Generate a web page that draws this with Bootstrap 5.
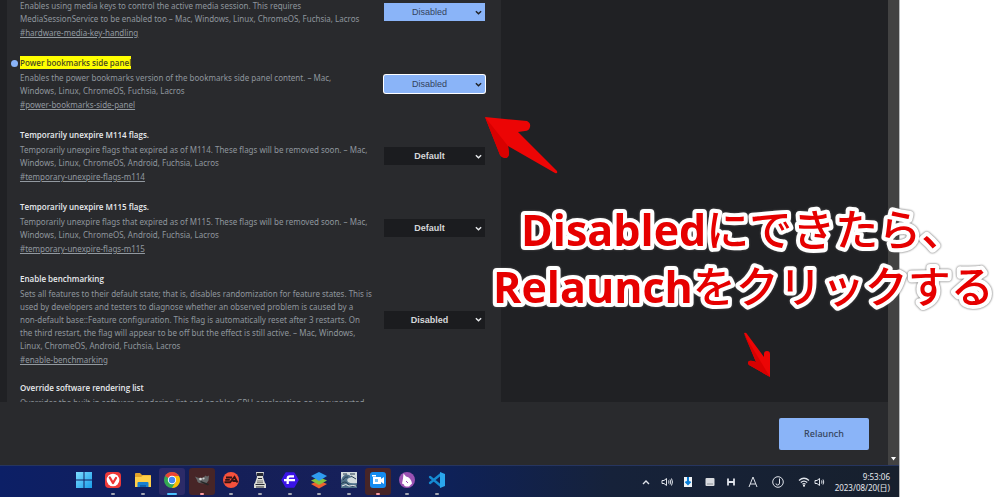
<!DOCTYPE html>
<html lang="ja">
<head>
<meta charset="utf-8">
<meta name="viewport" content="width=device-width, initial-scale=1">
<title>Experiments</title>
<link href="https://cdn.jsdelivr.net/npm/bootstrap@5.3.0/dist/css/bootstrap.min.css" rel="stylesheet">
<style>
  body { background: #fff; font-family: "Noto Sans", "Noto Sans CJK JP", sans-serif; font-size: 9px; }
  .desktop { width: 90%; border-right: 1px solid #b9bbbd; background: #202124; }
  .pane { background: #292a2d; width: 494px; margin-left: 7px; padding-left: 13px; padding-right: 16px; }
  .shift-up { margin-top: -16px; }
  .flag { margin-bottom: 16px; }
  .flag.tall { margin-bottom: 14px; }
  .flag-text { line-height: 13px; color: #8f969d; font-family: "Noto Sans", sans-serif; font-size: 8px; white-space: nowrap; }
  .flag-text.untitled { padding-top: 15px; }
  .flag-text h2 { font-family: "Open Sans", "Noto Sans", sans-serif; font-size: 8px; line-height: 14px; font-weight: 600; color: #e8eaed; margin: 0 0 1px; }
  .flag-text p { margin: 0 0 1px; }
  .flag-text a { display: block; line-height: 14px; color: #9299a0; }
  .flag-text h2 mark { background: #ff0; color: #4a4a20; padding: 0; display: inline-block; line-height: 13px; font-weight: 600; }
  .dot { position: absolute; left: -9px; top: 4px; width: 7px; height: 7px; border-radius: 50%; background: #8ab4f8; }
  .pick { width: 101px; height: 18px; min-height: 0; padding: 0 10px 0 0; text-align: center; text-align-last: center; border: 0; border-radius: 0;
    font: 600 9px/18px "Liberation Sans", sans-serif; color: #d5d7da; background-color: #1b1c1f; background-position: right 3px center; background-size: 7px 7px;
    background-image: url("data:image/svg+xml,%3csvg xmlns='http://www.w3.org/2000/svg' viewBox='0 0 8 8'%3e%3cpath d='M1 2.5l3 3 3-3' fill='none' stroke='%23e8eaed' stroke-width='1.6'/%3e%3c/svg%3e"); }
  .pick.changed { font-weight: 400; color: #34435c; background-color: #8ab4f8;
    background-image: url("data:image/svg+xml,%3csvg xmlns='http://www.w3.org/2000/svg' viewBox='0 0 8 8'%3e%3cpath d='M1 2.5l3 3 3-3' fill='none' stroke='%23202124' stroke-width='1.6'/%3e%3c/svg%3e"); }
  .pick.focused { border-radius: 2px; box-shadow: 0 0 0 1px #fff; }
  .scroller { width: 11px; background: #424242; }
  .scroller svg { width: 7px; height: 4px; margin-bottom: 4px; }
  .restart { background: #292a2d; height: 63px; padding-right: 19px; }
  .restart .btn { width: 90px; height: 32px; padding: 0; border-radius: 2px; border: 0; background: #8ab4f8; color: #35445c; font-size: 9px; font-weight: 500; }
  .taskbar { height: 32px; padding-left: 71px; padding-right: 9px; color: #dfe3ea; background: linear-gradient(90deg, #0c1f66, #151f58 25%, #16205a 40%, #0e2158 50%, #16223a 68%, #17202d); border-top: 1px solid #26355f; }
  .apps { width: 379px; }
  .apps button { width: 26px; height: 27px; padding: 0; border: 0; border-radius: 3px; background: none; position: relative; }
  .apps svg { display: block; width: 18px; height: 18px; margin: 3px auto 6px; }
  .apps .run::after { content: ""; position: absolute; left: 11px; bottom: 0; width: 4px; height: 2px; border-radius: 1px; background: #a4a7b3; }
  .apps .active { background: #2c2b68; }
  .apps .active::after { left: 8px; width: 10px; background: #4cc2ff; }
  .apps .alert-app { background: #472527; }
  .apps .alert-app::after { background: #ff9ca0; }
  .tray { width: 188px; margin-right: 8px; }
  .tray svg { width: 14px; height: 14px; fill: none; stroke: #dfe3ea; stroke-width: 1; }
  .tray-pair { gap: 2px; }
  .clock { font-size: 8px; line-height: 11px; color: #e8ebf0; }
  .note { position: absolute; overflow: visible; }
  .headline { left: 49%; top: 195px; width: 510px; height: 125px; filter: drop-shadow(0 0 1px #555); }
  .headline text { font-family: "Open Sans", "Noto Sans", sans-serif; font-size: 43px; font-weight: 700; fill: #e60000; stroke: #fff; stroke-width: 8px; stroke-linejoin: round; paint-order: stroke; }
  .headline .kana { font-family: "Noto Sans CJK JP", sans-serif; font-weight: 500; }
  .arrow-a { left: 485px; top: 117px; width: 73px; height: 58px; }
  .arrow-b { left: 743px; top: 332px; width: 28px; height: 46px; }
</style>
</head>
<body>
<div class="desktop vh-100 d-flex flex-column overflow-hidden">
  <div class="d-flex flex-grow-1 overflow-hidden">
    <div class="d-flex flex-column flex-grow-1 overflow-hidden">
      <main class="flex-grow-1 overflow-hidden d-flex">
        <div class="pane">
          <div class="shift-up">
            <section class="flag d-flex justify-content-between align-items-center">
              <div class="flag-text untitled">
                <p>Enables using media keys to control the active media session. This requires<br>MediaSessionService to be enabled too – Mac, Windows, Linux, ChromeOS, Fuchsia, Lacros</p>
                <a href="#hardware-media-key-handling">#hardware-media-key-handling</a>
              </div>
              <select class="form-select pick changed" aria-label="Hardware media key handling"><option>Disabled</option></select>
            </section>
            <section class="flag d-flex justify-content-between align-items-center">
              <div class="flag-text position-relative">
                <span class="dot"></span>
                <h2><mark>Power bookmarks side panel</mark></h2>
                <p>Enables the power bookmarks version of the bookmarks side panel content. – Mac,<br>Windows, Linux, ChromeOS, Fuchsia, Lacros</p>
                <a href="#power-bookmarks-side-panel">#power-bookmarks-side-panel</a>
              </div>
              <select class="form-select pick changed focused" aria-label="Power bookmarks side panel"><option>Disabled</option></select>
            </section>
            <section class="flag d-flex justify-content-between align-items-center">
              <div class="flag-text">
                <h2>Temporarily unexpire M114 flags.</h2>
                <p>Temporarily unexpire flags that expired as of M114. These flags will be removed soon. – Mac,<br>Windows, Linux, ChromeOS, Android, Fuchsia, Lacros</p>
                <a href="#temporary-unexpire-flags-m114">#temporary-unexpire-flags-m114</a>
              </div>
              <select class="form-select pick" aria-label="Temporarily unexpire M114 flags"><option>Default</option></select>
            </section>
            <section class="flag d-flex justify-content-between align-items-center">
              <div class="flag-text">
                <h2>Temporarily unexpire M115 flags.</h2>
                <p>Temporarily unexpire flags that expired as of M115. These flags will be removed soon. – Mac,<br>Windows, Linux, ChromeOS, Android, Fuchsia, Lacros</p>
                <a href="#temporary-unexpire-flags-m115">#temporary-unexpire-flags-m115</a>
              </div>
              <select class="form-select pick" aria-label="Temporarily unexpire M115 flags"><option>Default</option></select>
            </section>
            <section class="flag tall d-flex justify-content-between align-items-center">
              <div class="flag-text">
                <h2>Enable benchmarking</h2>
                <p>Sets all features to their default state; that is, disables randomization for feature states. This is<br>used by developers and testers to diagnose whether an observed problem is caused by a<br>non-default base::Feature configuration. This flag is automatically reset after 3 restarts. On<br>the third restart, the flag will appear to be off but the effect is still active. – Mac, Windows,<br>Linux, ChromeOS, Android, Fuchsia, Lacros</p>
                <a href="#enable-benchmarking">#enable-benchmarking</a>
              </div>
              <select class="form-select pick" aria-label="Enable benchmarking"><option>Disabled</option></select>
            </section>
            <section class="flag d-flex justify-content-between align-items-start">
              <div class="flag-text">
                <h2>Override software rendering list</h2>
                <p>Overrides the built-in software rendering list and enables GPU-acceleration on unsupported</p>
              </div>
            </section>
          </div>
        </div>
      </main>
      <footer class="restart d-flex align-items-center justify-content-end flex-shrink-0">
        <button type="button" class="btn">Relaunch</button>
      </footer>
    </div>
    <div class="scroller d-flex align-items-end justify-content-center flex-shrink-0">
      <svg viewBox="0 0 7 4"><path d="M1 0h5L3.500 3.500z" fill="#fff"/></svg>
    </div>
  </div>

  <nav class="taskbar d-flex align-items-center flex-shrink-0" aria-label="Taskbar">
    <div class="apps d-flex justify-content-between flex-shrink-0">
      <button type="button" aria-label="Start"><svg viewBox="0 0 18 18"><defs><linearGradient id="win" x2="1" y2="1"><stop stop-color="#7ddcff"/><stop offset="1" stop-color="#199de8"/></linearGradient></defs><path d="M1 1h7.500v7.500H1zM9.500 1H17v7.500H9.500zM1 9.500h7.500V17H1zM9.500 9.500H17V17H9.500z" fill="url(#win)"/></svg></button>
      <button type="button" class="run" aria-label="Vivaldi"><svg viewBox="0 0 18 18"><rect x="1" y="1" width="16" height="16" rx="4" fill="#ef3939"/><circle cx="9" cy="9" r="6.300" fill="#fff"/><path d="M5.800 6.500L9 12l3-5" fill="none" stroke="#e33" stroke-width="2.300" stroke-linecap="round" stroke-linejoin="round"/></svg></button>
      <button type="button" class="run" aria-label="Explorer"><svg viewBox="0 0 18 18"><path d="M1 3q0-1 1-1h4l2 2h8q1 0 1 1v4H1z" fill="#e2a32b"/><path d="M1 6h6l2-1.500h8V16H1z" fill="#ffcf48"/><path d="M3.500 16v-4q0-1 1-1h9q1 0 1 1v4z" fill="#187fd0"/><path d="M6 16v-2h6v2z" fill="#0c60ad"/></svg></button>
      <button type="button" class="run active" aria-label="Chrome"><svg viewBox="0 0 18 18"><circle cx="9" cy="9" r="8" fill="#34a853"/><path d="M9 9L2.070 5A8 8 0 0 1 15.930 5z" fill="#ea4335"/><path d="M9 9V5h6.930A8 8 0 0 1 9 17l3.460-6z" fill="#fbbc04"/><circle cx="9" cy="9" r="4.200" fill="#fff"/><circle cx="9" cy="9" r="3.200" fill="#4285f4"/></svg></button>
      <button type="button" class="run alert-app" aria-label="GIMP"><svg viewBox="0 0 18 18"><path d="M2 5.500q3 1.500 6 1.500 3 0 4.500-2.500l1.500 1 2-1-.5 5q-1 2.500-4 3L6 12q-2-1-2-3z" fill="#66686a"/><circle cx="7.500" cy="8" r="1.300" fill="#ddd"/><circle cx="10.500" cy="7.500" r="1.100" fill="#ccc"/><path d="M8 10l8 3-1 1.500-8-3.500z" fill="#252628"/></svg></button>
      <button type="button" class="run" aria-label="EA"><svg viewBox="0 0 18 18"><circle cx="9" cy="9" r="8" fill="#f6513c"/><path d="M4 6.500h6M3.200 8.900h4.600M2.500 11.300h5.600L12.500 6l3 5.500M10.500 10h4" fill="none" stroke="#351313" stroke-width="1.900"/></svg></button>
      <button type="button" class="run" aria-label="Tool"><svg viewBox="0 0 18 18"><path d="M5 1h8l-1 5 2 6 1 1v4H3v-4l1-1 2-6z" fill="#dcdcd6"/><path d="M6 2h6v3H6zM7 7h4v1H7zM4.500 13h9v1h-9zM5 15.500h8v1H5z" fill="#292b33"/><path d="M6 10h6M6 11.700h6" stroke="#777"/></svg></button>
      <button type="button" class="run" aria-label="F"><svg viewBox="0 0 18 18"><path d="M5 2h8L17 9l-4 7H5L1 9z" fill="#3b14e8" stroke="#3b14e8" stroke-width="1.500" stroke-linejoin="round"/><path d="M13 5.300H9Q6.700 5.300 6.700 7.500v5.500M3 9.200H14" fill="none" stroke="#fff" stroke-width="2.300"/></svg></button>
      <button type="button" class="run" aria-label="Layers"><svg viewBox="0 0 18 18"><path d="M9 9.500l8 3.500-8 4.500L1 13z" fill="#f0612f"/><path d="M9 6l8 3.500L9 14 1 9.500z" fill="#82c341"/><path d="M9 1l8 4-8 5-8-5z" fill="#2f9cf1"/></svg></button>
      <button type="button" class="run" aria-label="Wave"><svg viewBox="0 0 18 18"><path d="M1 1h16v16H1z" fill="#d4dcdd"/><path d="M1 9q3-7 8-5l3 2-3 1q-3 1-1 4 3 2 9 1v5H1z" fill="#51718a"/><path d="M1 13q4-4 7 0t9 1M3 9q2-4 5-3M10 3h5M11 5l5 3M3 3h4" fill="none" stroke="#283f54"/><path d="M2 15q4-3 7 0 4-1 7 0" fill="none" stroke="#eee"/></svg></button>
      <button type="button" class="run alert-app" aria-label="Recorder"><svg viewBox="0 0 18 18"><rect x="1" y="1" width="16" height="16" rx="3" fill="#168cf0"/><path d="M4 6h8v2l3-2v7l-3-2v2H4z" fill="#fff"/><path d="M3 4h4v1.500H3z" fill="#fff"/><path d="M6 8h3v3H6z" fill="#75bef8"/></svg></button>
      <button type="button" class="run" aria-label="Unicorn"><svg viewBox="0 0 18 18"><circle cx="9" cy="9" r="8" fill="#9b51b2"/><path d="M5.500 2.500l2.500 3q5 1 6 7l-3 3q-5 .5-5-2l-2-1 1-5z" fill="#fff"/><path d="M8 10l2 2" stroke="#9b51b2"/></svg></button>
      <button type="button" class="run" aria-label="Code"><svg viewBox="0 0 18 18"><path d="M2 6l11 9M2 12L13 3" stroke="#168bd2" stroke-width="2.300" stroke-linecap="round"/><path d="M12 1l5 2v12l-5 2z" fill="#2aa7ee"/></svg></button>
    </div>
    <div class="tray d-flex align-items-center justify-content-between flex-shrink-0 ms-auto">
      <svg viewBox="0 0 14 14"><path d="M4 9l3-3 3 3" stroke-width="1.400"/></svg>
      <svg viewBox="0 0 14 14"><path d="M2 5.500h2l2.500-2v7l-2.500-2h-2zM8.500 5.500q1 1.500 0 3M10 4.500q1.500 2.500 0 5M11.500 3.500q2 3.500 0 7"/></svg>
      <svg viewBox="0 0 14 14"><path d="M3 2h8v10H3z" fill="#eef3f7" stroke="none"/><path d="M7 2v6M4.500 6.500L7 9l2.500-2.500" stroke="#087dd7" stroke-width="2"/></svg>
      <svg viewBox="0 0 14 14"><rect x="2.500" y="3" width="9" height="8" rx="1" fill="#d8dbdf" stroke="none"/><path d="M4 9h6" stroke="#8b9096"/></svg>
      <svg viewBox="0 0 14 14"><path d="M4 3.500v7M10 3.500v7M4 7h6" stroke-width="1.800"/></svg>
      <svg viewBox="0 0 14 14"><path d="M3 12L7 2l4 10M4.300 9h5.400"/></svg>
      <svg viewBox="0 0 14 14" class="ms-1"><circle cx="7" cy="7" r="5.300"/><path d="M8.500 3.500V8q0 2-2 2-1.500 0-1.500-1.500"/></svg>
      <div class="tray-pair d-flex ms-1">
        <svg viewBox="0 0 14 14"><path d="M2 5.500q5-4.500 10 0M3.800 7.500q3.200-2.800 6.400 0M5.500 9.200q1.500-1.200 3 0" stroke-width="1.300"/><circle cx="7" cy="10.800" r="1" fill="#fff" stroke="none"/></svg>
        <svg viewBox="0 0 14 14"><path d="M2 5.500h2l2.500-2v7l-2.500-2h-2zM8.500 5.500q1 1.500 0 3M10 4.500q1.500 2.500 0 5"/></svg>
      </div>
    </div>
    <div class="clock text-end text-nowrap">9:53:06<br>2023/08/20(日)</div>
  </nav>
</div>

<svg class="note headline" viewBox="0 0 510 125">
  <text x="31" y="51">Disabled<tspan class="kana">にできたら、</tspan></text>
  <text x="3" y="108">Relaunch<tspan class="kana">をクリックする</tspan></text>
</svg>
<svg class="note arrow-a" viewBox="0 0 73 58"><path d="M0 0L42 4Q46 6 45 10 44 14 40 14L33 15 72 54Q73 57 70 56L23 29 24 36Q24 41 20 41 17 41 15 38z" fill="#ec0505"/><path d="M0 0L23 29 24 36Q24 41 20 41 17 41 15 38z" fill="#d80000"/></svg>
<svg class="note arrow-b" viewBox="0 0 28 46"><path d="M1 1Q3 0 4 2L21 25 21 22Q21 19 24 19 27 19 27 22V45L6 33Q4 31 6 29 8 28 13 30z" fill="#ec0505"/><path d="M27 45L6 33Q4 31 6 29 8 28 13 30L1 2z" fill="#d80000"/></svg>
<script src="https://cdn.jsdelivr.net/npm/bootstrap@5.3.0/dist/js/bootstrap.bundle.min.js"></script>
</body>
</html>
